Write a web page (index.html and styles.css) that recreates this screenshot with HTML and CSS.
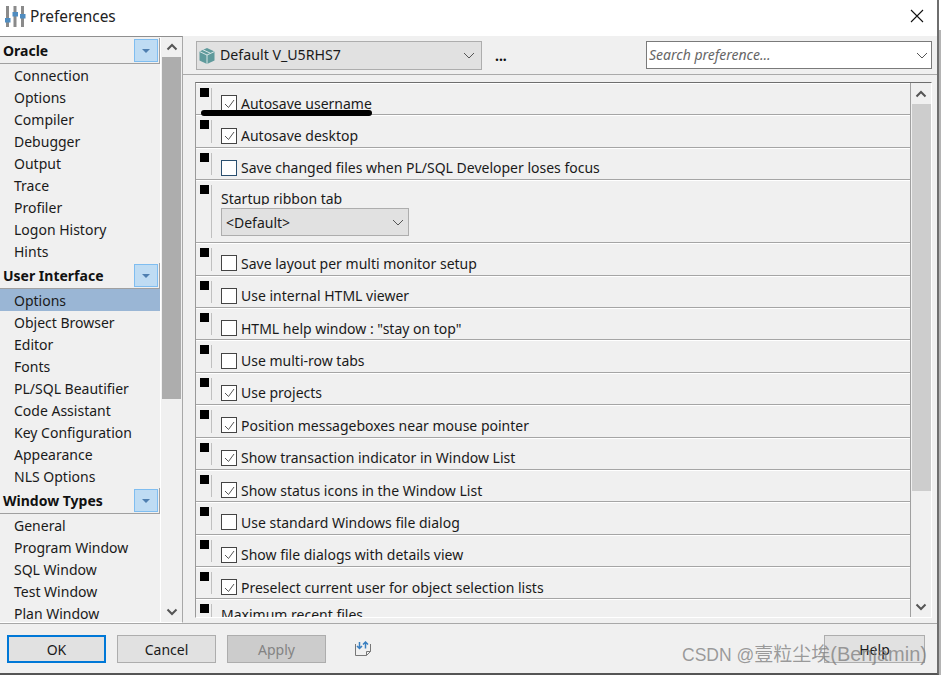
FILE: index.html
```html
<!DOCTYPE html>
<html lang="en">
<head>
<meta charset="utf-8">
<title>Preferences</title>
<link rel="stylesheet" href="styles.css">
</head>
<body>
<div class="window">
  <header class="titlebar">
    <svg class="app-icon" width="21" height="21" viewBox="0 0 21 21">
      <path d="M1 0h3v21H1zM8.500 0h3v21h-3zM16 0h3v21h-3z" fill="#8a8a8a"/>
      <path d="M0 12h5.500v4.500H0zM7.500 6H13v4.500H7.500zM15 8h5.500v4.500H15z" fill="#4f8cc0"/>
    </svg>
    <span class="title">Preferences</span>
    <svg class="close" width="14" height="14" viewBox="0 0 14 14"><path d="M1 1l12 12M13 1L1 13" stroke="#111" stroke-width="1.100" fill="none"/></svg>
  </header>
  <div class="content">
    <aside class="sidebar">
      <div class="tree">
        <div class="group"><b>Oracle</b><span class="expander"><i></i></span></div>
        <div class="item">Connection</div><div class="item">Options</div><div class="item">Compiler</div><div class="item">Debugger</div><div class="item">Output</div><div class="item">Trace</div><div class="item">Profiler</div><div class="item">Logon History</div><div class="item">Hints</div>
        <div class="group"><b>User Interface</b><span class="expander"><i></i></span></div>
        <div class="item selected">Options</div><div class="item">Object Browser</div><div class="item">Editor</div><div class="item">Fonts</div><div class="item">PL/SQL Beautifier</div><div class="item">Code Assistant</div><div class="item">Key Configuration</div><div class="item">Appearance</div><div class="item">NLS Options</div>
        <div class="group"><b>Window Types</b><span class="expander"><i></i></span></div>
        <div class="item">General</div><div class="item">Program Window</div><div class="item">SQL Window</div><div class="item">Test Window</div><div class="item">Plan Window</div>
      </div>
      <div class="scrollbar side-scroll">
        <svg class="arrow" width="12" height="8" viewBox="0 0 12 8"><path d="M1.500 6.500L6 2l4.500 4.500" stroke="#555" stroke-width="2" fill="none"/></svg>
        <div class="track"><div class="thumb"></div></div>
        <svg class="arrow" width="12" height="8" viewBox="0 0 12 8"><path d="M1.500 1.500L6 6l4.500-4.500" stroke="#555" stroke-width="2" fill="none"/></svg>
      </div>
    </aside>
    <main class="main">
      <div class="toolbar">
        <div class="profile">
          <svg width="18" height="18" viewBox="0 0 18 18"><path d="M9 1l7.500 3.500v9L9 17l-7.500-3.500v-9z" fill="#5f9a9c"/><path d="M9 8l7.500-3.500M9 8L1.500 4.500M9 8v9M5 2.800l7.500 3.500" stroke="#d9e6e6" stroke-width="1" fill="none"/></svg>
          <span class="profile-name">Default V_U5RHS7</span>
          <svg class="chev" width="12" height="7" viewBox="0 0 12 7"><path d="M1 1l5 5 5-5" stroke="#555" fill="none"/></svg>
        </div>
        <span class="dots">...</span>
        <div class="search">
          <span class="search-text">Search preference...</span>
          <svg class="chev" width="12" height="7" viewBox="0 0 12 7"><path d="M1 1l5 5 5-5" stroke="#555" fill="none"/></svg>
        </div>
      </div>
      <div class="options">
        <div class="rows">
          <div class="row"><span class="mark"></span><span class="rule"></span><label class="opt"><span class="box"><svg width="13" height="13" viewBox="0 0 13 13"><path d="M2 7l3.500 3.500L11 3" stroke="#555" fill="none"/></svg></span>Autosave username</label></div>
          <div class="row"><span class="mark"></span><span class="rule"></span><label class="opt"><span class="box"><svg width="13" height="13" viewBox="0 0 13 13"><path d="M2 7l3.500 3.500L11 3" stroke="#555" fill="none"/></svg></span>Autosave desktop</label></div>
          <div class="row"><span class="mark"></span><span class="rule"></span><label class="opt"><span class="box blue"></span>Save changed files when PL/SQL Developer loses focus</label></div>
          <div class="row tall"><span class="mark"></span><span class="rule"></span>
            <div class="stack"><span class="stack-label">Startup ribbon tab</span>
              <div class="select"><span>&lt;Default&gt;</span><svg width="12" height="7" viewBox="0 0 12 7"><path d="M1 1l5 5 5-5" stroke="#555" fill="none"/></svg></div>
            </div>
          </div>
          <div class="row"><span class="mark"></span><span class="rule"></span><label class="opt"><span class="box"></span>Save layout per multi monitor setup</label></div>
          <div class="row"><span class="mark"></span><span class="rule"></span><label class="opt"><span class="box"></span>Use internal HTML viewer</label></div>
          <div class="row"><span class="mark"></span><span class="rule"></span><label class="opt"><span class="box"></span>HTML help window : "stay on top"</label></div>
          <div class="row"><span class="mark"></span><span class="rule"></span><label class="opt"><span class="box"></span>Use multi-row tabs</label></div>
          <div class="row"><span class="mark"></span><span class="rule"></span><label class="opt"><span class="box"><svg width="13" height="13" viewBox="0 0 13 13"><path d="M2 7l3.500 3.500L11 3" stroke="#555" fill="none"/></svg></span>Use projects</label></div>
          <div class="row"><span class="mark"></span><span class="rule"></span><label class="opt"><span class="box"><svg width="13" height="13" viewBox="0 0 13 13"><path d="M2 7l3.500 3.500L11 3" stroke="#555" fill="none"/></svg></span>Position messageboxes near mouse pointer</label></div>
          <div class="row"><span class="mark"></span><span class="rule"></span><label class="opt"><span class="box"><svg width="13" height="13" viewBox="0 0 13 13"><path d="M2 7l3.500 3.500L11 3" stroke="#555" fill="none"/></svg></span>Show transaction indicator in Window List</label></div>
          <div class="row"><span class="mark"></span><span class="rule"></span><label class="opt"><span class="box"><svg width="13" height="13" viewBox="0 0 13 13"><path d="M2 7l3.500 3.500L11 3" stroke="#555" fill="none"/></svg></span>Show status icons in the Window List</label></div>
          <div class="row"><span class="mark"></span><span class="rule"></span><label class="opt"><span class="box"></span>Use standard Windows file dialog</label></div>
          <div class="row"><span class="mark"></span><span class="rule"></span><label class="opt"><span class="box"><svg width="13" height="13" viewBox="0 0 13 13"><path d="M2 7l3.500 3.500L11 3" stroke="#555" fill="none"/></svg></span>Show file dialogs with details view</label></div>
          <div class="row"><span class="mark"></span><span class="rule"></span><label class="opt"><span class="box"><svg width="13" height="13" viewBox="0 0 13 13"><path d="M2 7l3.500 3.500L11 3" stroke="#555" fill="none"/></svg></span>Preselect current user for object selection lists</label></div>
          <div class="row last"><span class="mark"></span><span class="rule"></span><div class="stack"><span class="stack-label">Maximum recent files</span></div></div>
        </div>
        <div class="scrollbar main-scroll">
          <svg class="arrow" width="12" height="8" viewBox="0 0 12 8"><path d="M1.500 6.500L6 2l4.500 4.500" stroke="#555" stroke-width="2" fill="none"/></svg>
          <div class="track"><div class="thumb"></div></div>
          <svg class="arrow" width="12" height="8" viewBox="0 0 12 8"><path d="M1.500 1.500L6 6l4.500-4.500" stroke="#555" stroke-width="2" fill="none"/></svg>
        </div>
      </div>
    </main>
  </div>
  <footer class="footer">
    <button class="btn default">OK</button>
    <button class="btn">Cancel</button>
    <button class="btn disabled">Apply</button>
    <svg class="pin" width="18" height="16" viewBox="0 0 18 16"><path d="M1.500 3v11.500h11l4-4V3M12.500 14.500v-4h4" stroke="#777" fill="none"/><path d="M5.500 7.500V1M3 5l2.500 2.500L8 5M11.500 1v6.500M9 3.500L11.500 1 14 3.500" stroke="#3a7fc0" stroke-width="1.500" fill="none"/></svg>
    <button class="btn help">Help</button>
  </footer>
  <div class="ink"></div>
  <div class="watermark"><span class="wm-small">CSDN @</span><span class="wm-mid">壹粒尘埃</span><span class="wm-large">(Benjamin)</span></div>
</div>
<div class="backdrop"></div>
</body>
</html>
```
FILE: styles.css
```css
* { box-sizing: border-box; }
html, body { margin: 0; padding: 0; background: #fff; }
body { position: relative; width: 941px; height: 675px; overflow: hidden; font-family: "Noto Sans", "Open Sans", sans-serif; font-size: 14px; color: #1a1a1a; }
.window { position: relative; width: 939px; height: 675px; background: #f0f0f0; border-right: 2px solid #6e6e6e; border-bottom: 2px solid #555; display: flex; flex-direction: column; }
.backdrop { position: absolute; left: 939px; top: 30px; bottom: 0; width: 2px; background: #b4b4b4; }
.titlebar { height: 36px; background: #fff; display: flex; align-items: center; padding: 0 13px 0 5px; flex: none; }
.app-icon { margin-right: 4px; margin-top: -4px; }
.title { font-size: 15.400px; flex: 1; color: #222; margin-top: -4px; }
.close { margin-top: -4px; }
.content { flex: 1; display: flex; min-height: 0; }
.sidebar { width: 183px; height: 587px; display: flex; border-top: 1px solid #8f8f8f; border-right: 1px solid #a8a8a8; border-bottom: 1px solid #fff; flex: none; overflow: hidden; }
.tree { width: 161px; flex: none; border-right: 1px solid #fff; overflow: hidden; }
.group { height: 26px; margin-top: 1px; display: flex; align-items: center; justify-content: space-between; padding: 0 1px 0 3px; border-bottom: 1px solid #a0a0a0; border-right: 1px solid #a0a0a0; }
.group b { font-size: 14px; color: #111; }
.expander { width: 24px; height: 23px; background: #bfdcf3; border: 1px solid #7fbdf0; display: flex; align-items: center; justify-content: center; }
.expander i { width: 0; height: 0; border-left: 4px solid transparent; border-right: 4px solid transparent; border-top: 4px solid #4f7fb0; }
.item { height: 22px; line-height: 20px; padding: 2px 0 0 14px; color: #1a1a1a; }
.item.selected { background: #9ab6d5; line-height: 22px; padding-top: 1px; }
.scrollbar { background: #f0f0f0; display: flex; flex-direction: column; align-items: center; flex: none; }
.arrow { flex: none; margin: 6px 0; }
.side-scroll { width: 21px; padding: 0 1px; }
.side-scroll .track { flex: 1; width: 100%; }
.side-scroll .thumb { height: 342px; width: 19px; background: #adadad; }
.main { flex: 1; min-width: 0; padding: 0 5px 0 12px; display: flex; flex-direction: column; }
.toolbar { height: 39px; display: flex; align-items: flex-start; margin: 0 -5px 7px -12px; padding: 5px 5px 0 13px; border-bottom: 1px solid #aaa; flex: none; }
.profile { width: 286px; height: 29px; background: #e1e1e1; border: 1px solid #adadad; display: flex; align-items: center; padding: 0 3px 2px 1px; gap: 4px; }
.profile-name { flex: 1; font-size: 14.200px; }
.profile svg { margin-top: 2px; }
.profile .chev { margin-right: 3px; }
.dots { margin-left: 13px; font-size: 14px; line-height: 29px; color: #111; flex: 1; font-weight: 700; }
.search { width: 286px; height: 28px; background: #fff; border: 1px solid #7a7a7a; display: flex; align-items: center; justify-content: space-between; padding: 0 3px 2px 2px; }
.search .chev { margin-top: 2px; }
.search-text { font-style: italic; color: #666; font-size: 14px; }
.options { height: 536px; display: flex; border-top: 1px solid #6e6e6e; border-left: 1px solid #9a9a9a; border-right: 1px solid #fff; border-bottom: 1px solid #fff; overflow: hidden; }
.rows { flex: 1; min-width: 0; }
.row { height: 32.400px; display: flex; border-bottom: 1px solid #a5a5a5; border-top: 1px solid #fff; padding-left: 4px; overflow: hidden; }
.row.tall { height: 63px; }
.row.last { border-bottom: 0; height: 40px; }
.mark { width: 9px; height: 9px; background: #000; margin-top: 4px; flex: none; }
.rule { width: 1px; margin: 4px 0 4px 2px; background: #c0c0c0; flex: none; align-self: stretch; }
.opt { display: flex; align-items: center; padding: 8px 0 0 9px; height: 100%; }
.box { width: 16px; height: 16px; border: 1px solid #444; background: #fff; margin-right: 4px; display: flex; align-items: center; justify-content: center; flex: none; }
.box.blue { border-color: #2a4f6f; }
.stack { padding: 10px 0 0 9px; display: flex; flex-direction: column; }
.stack-label { height: 14px; line-height: 15px; margin-bottom: 3px; overflow: hidden; flex: none; }
.row.last .stack { padding-top: 6px; }
.row.last .stack-label { height: auto; line-height: 18px; }
.select { width: 188px; height: 28px; background: #e1e1e1; border: 1px solid #adadad; display: flex; align-items: center; justify-content: space-between; padding: 0 4px 0 4px; }
.main-scroll { width: 21px; border-left: 1px solid #a0a0a0; }
.main-scroll .arrow:first-child { margin-top: 7px; }
.main-scroll .track { flex: 1; width: 100%; padding-left: 1px; }
.main-scroll .thumb { width: 19px; height: 387px; background: #cdcdcd; }
.footer { height: 50px; flex: none; display: flex; align-items: center; padding: 1px 12px 0 7px; gap: 11px; border-top: 1px solid #a8a8a8; }
.btn { width: 99px; height: 28px; background: #e1e1e1; border: 1px solid #adadad; font: inherit; font-size: 14px; color: #1a1a1a; padding: 0; }
.btn.default { border: 2px solid #0078d7; }
.btn.disabled { background: #ccc; color: #838383; }
.pin { margin-left: 17px; }
.help { margin-left: auto; width: 101px; }
.ink { position: absolute; left: 201px; top: 110px; width: 171px; height: 6px; background: #000; border-radius: 3px; }
.watermark { position: absolute; left: 682px; top: 641px; font-family: "Liberation Sans", "Noto Sans CJK SC", sans-serif; font-size: 19px; line-height: 26px; color: rgba(125,125,125,.75); white-space: nowrap; }
.wm-small { font-size: 17.500px; }
.wm-mid { font-size: 19px; }
.wm-large { font-size: 20px; }
```
